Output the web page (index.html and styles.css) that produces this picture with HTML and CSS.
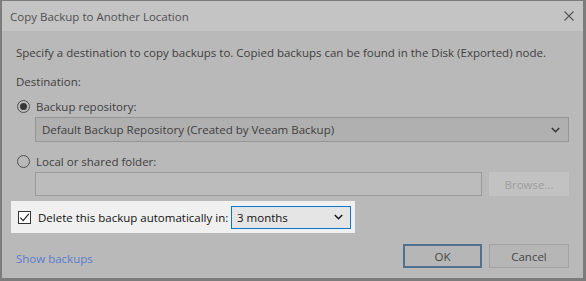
FILE: index.html
```html
<!DOCTYPE html>
<html>
<head>
<meta charset="utf-8">
<link rel="stylesheet" href="styles.css">
</head>
<body>
<div class="window">
  <div class="titlebar">
    <span class="title">Copy Backup to Another Location</span>
    <svg class="close" width="10" height="10" viewBox="0 0 10 10"><path d="M0.5 0.5 L9.5 9.5 M9.5 0.5 L0.5 9.5" stroke="#555" stroke-width="1.1" fill="none"/></svg>
  </div>
  <div class="content">
    <p class="intro">Specify a destination to copy backups to. Copied backups can be found in the Disk (Exported) node.</p>
    <p class="label">Destination:</p>
    <div class="radio-row">
      <span class="radio checked"><span class="dot"></span></span>
      <span>Backup repository:</span>
    </div>
    <div class="select">
      <span>Default Backup Repository (Created by Veeam Backup)</span>
      <svg class="chev" width="9" height="6" viewBox="0 0 9 6"><path d="M0.8 1 L4.5 4.7 L8.2 1" stroke="#333" stroke-width="1.4" fill="none"/></svg>
    </div>
    <div class="radio-row second">
      <span class="radio"></span>
      <span>Local or shared folder:</span>
    </div>
    <div class="folder-row">
      <div class="input"></div>
      <div class="browse">Browse...</div>
    </div>
    <div class="highlight">
      <span class="checkbox"><svg width="11" height="11" viewBox="0 0 11 11"><path d="M1.3 5.6 L4.2 8.6 L9.8 1.8" stroke="#222" stroke-width="1.2" fill="none"/></svg></span>
      <span class="hl-label">Delete this backup automatically in:</span>
      <div class="combo">
        <span>3 months</span>
        <svg class="chev" width="9" height="6" viewBox="0 0 9 6"><path d="M0.8 1 L4.5 4.7 L8.2 1" stroke="#111" stroke-width="1.4" fill="none"/></svg>
      </div>
    </div>
    <div class="footer">
      <a class="link" href="#">Show backups</a>
      <div class="buttons">
        <div class="btn ok">OK</div>
        <div class="btn">Cancel</div>
      </div>
    </div>
  </div>
</div>
</body>
</html>
```
FILE: styles.css
```css
html, body {
  margin: 0;
  padding: 0;
  background: #b9b9b9;
}
.window {
  width: 586px;
  height: 281px;
  box-sizing: border-box;
  border-style: solid;
  border-color: #7c7c7c;
  border-width: 1px 3px 3px 2px;
  background: #b9b9b9;
  font-family: "Open Sans", "Noto Sans", sans-serif;
  font-size: 11.5px;
  color: #3e3e3e;
  display: flex;
  flex-direction: column;
  white-space: nowrap;
}
.titlebar {
  height: 30px;
  background: #c4c4c4;
  display: flex;
  align-items: center;
  justify-content: space-between;
  padding: 0 9px 0 8px;
  flex: none;
}
.title {
  color: #505050;
}
.close {
  display: block;
}
.content {
  padding: 0 14px 0 14px;
  display: flex;
  flex-direction: column;
}
.intro {
  margin: 14px 0 0 0;
  line-height: 16px;
}
.label {
  margin: 13px 0 0 0;
  line-height: 16px;
}
.radio-row {
  display: flex;
  align-items: center;
  gap: 6px;
  margin-top: 8px;
  height: 16px;
  padding-left: 1px;
}
.radio-row.second {
  margin-top: 11px;
}
.radio {
  width: 11px;
  height: 11px;
  border: 1px solid #505050;
  border-radius: 50%;
  display: flex;
  align-items: center;
  justify-content: center;
  flex: none;
}
.dot {
  width: 7px;
  height: 7px;
  border-radius: 50%;
  background: #353535;
}
.select {
  margin: 3px 0 0 19px;
  height: 25px;
  box-sizing: border-box;
  border: 1px solid #959595;
  background: #b0b0b0;
  display: flex;
  align-items: center;
  justify-content: space-between;
  padding: 0 8px 0 6px;
}
.folder-row {
  display: flex;
  gap: 7px;
  margin: 3px 0 0 19px;
  height: 24px;
}
.input {
  flex: 1;
  box-sizing: border-box;
  border: 1px solid #9a9a9a;
  background: #bcbcbc;
}
.browse {
  width: 80px;
  background: #c2c2c2;
  color: #9d9d9d;
  display: flex;
  align-items: center;
  justify-content: center;
}
.highlight {
  margin: 5px 0 0 -5px;
  width: 344px;
  height: 32px;
  background: #f0f0f0;
  display: flex;
  align-items: center;
  color: #111;
  box-sizing: border-box;
  padding-left: 7px;
}
.checkbox {
  width: 11px;
  height: 11px;
  border: 1px solid #333;
  display: flex;
  align-items: center;
  justify-content: center;
  flex: none;
  background: #fff;
}
.hl-label {
  margin-left: 7px;
}
.combo {
  margin-left: auto;
  margin-right: 4px;
  width: 120px;
  height: 23px;
  box-sizing: border-box;
  border: 1px solid #0a78c8;
  background: #e5e5e5;
  display: flex;
  align-items: center;
  justify-content: space-between;
  padding: 0 7px 0 5px;
}
.footer {
  display: flex;
  justify-content: space-between;
  align-items: flex-end;
  margin-top: 11px;
}
.link {
  color: #5b7cce;
  text-decoration: none;
  line-height: 16px;
  margin-bottom: 1px;
}
.buttons {
  display: flex;
  gap: 7px;
}
.btn {
  width: 80px;
  height: 24px;
  box-sizing: border-box;
  border: 1px solid #a3a3a3;
  background: #b6b6b6;
  display: flex;
  align-items: center;
  justify-content: center;
  color: #464646;
}
.btn.ok {
  width: 79px;
  border: 2px solid #50708f;
}
```
